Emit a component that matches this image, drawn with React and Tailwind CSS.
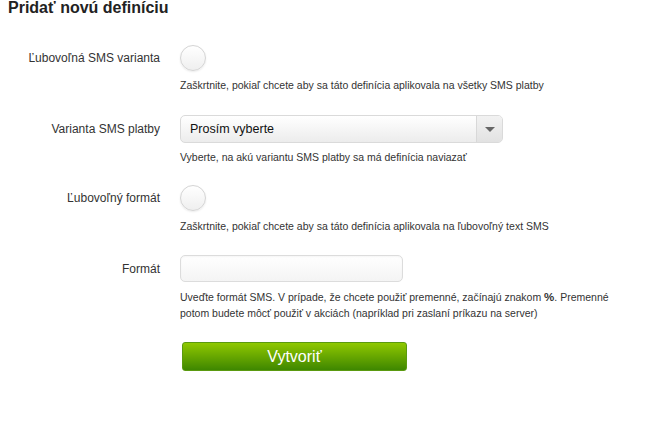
function Radio() {
  return (
    <div className="w-[26px] h-[26px] rounded-full border border-[#d4d4d4] bg-gradient-to-b from-white to-[#efefef] shadow-[0_1px_2px_rgba(0,0,0,0.08)]" />
  );
}

function Row({ label, children, help, className = "", h = "h-[26px]" }) {
  return (
    <div className={`flex ${className}`}>
      <div className={`w-[160px] ${h} flex items-center justify-end text-[12px] text-[#333]`}>
        {label}
      </div>
      <div className="ml-[20px]">
        {children}
        {help}
      </div>
    </div>
  );
}

export default function App() {
  return (
    <div className="w-[662px] h-[426px] bg-white overflow-hidden font-['Liberation_Sans',Arial,sans-serif] text-[#333]">
      <h1 className="ml-[8px] -mt-[1px] text-[16px] font-bold leading-[18px] text-[#222]">
        Pridať novú definíciu
      </h1>

      <div className="mt-[28px]">
        <Row
          label="Ľubovoľná SMS varianta"
          help={
            <p className="mt-[6px] text-[10.5px] leading-[16px] text-[#333]">
              Zaškrtnite, pokiaľ chcete aby sa táto definícia aplikovala na všetky SMS platby
            </p>
          }
        >
          <Radio />
        </Row>

        <Row
          className="mt-[22px]"
          h="h-[28px]"
          label="Varianta SMS platby"
          help={
            <p className="mt-[6px] text-[10.5px] leading-[16px] text-[#333]">
              Vyberte, na akú variantu SMS platby sa má definícia naviazať
            </p>
          }
        >
          <div className="w-[323px] h-[28px] flex rounded-[5px] border border-[#dadada] bg-gradient-to-b from-white to-[#ececec] overflow-hidden">
            <div className="flex-1 flex items-center pl-[9px] text-[12.5px] text-[#111]">
              Prosím vyberte
            </div>
            <div className="w-[26px] flex items-center justify-center border-l border-[#d8d8d8] bg-gradient-to-b from-[#f2f2f2] to-[#e2e2e2]">
              <div className="w-0 h-0 border-l-[5px] border-r-[5px] border-t-[5px] border-l-transparent border-r-transparent border-t-[#666]" />
            </div>
          </div>
        </Row>

        <Row
          className="mt-[20px]"
          label="Ľubovoľný formát"
          help={
            <p className="mt-[7px] text-[10.5px] leading-[16px] text-[#333]">
              Zaškrtnite, pokiaľ chcete aby sa táto definícia aplikovala na ľubovoľný text SMS
            </p>
          }
        >
          <Radio />
        </Row>

        <Row
          className="mt-[21px]"
          h="h-[27px]"
          label="Formát"
          help={
            <p className="mt-[7px] text-[10.5px] leading-[16px] text-[#333]">
              Uveďte formát SMS. V prípade, že chcete použiť premenné, začínajú znakom{" "}
              <b className="text-[11.5px]">%</b>. Premenné
              <br />
              potom budete môcť použiť v akciách (napríklad pri zaslaní príkazu na server)
            </p>
          }
        >
          <div className="w-[223px] h-[27px] rounded-[5px] border border-[#dcdcdc] bg-gradient-to-b from-white to-[#f4f4f4] shadow-[inset_0_1px_2px_rgba(0,0,0,0.04)]" />
        </Row>

        <div className="mt-[21px] ml-[182px]">
          <button className="w-[225px] h-[29px] rounded-[3px] border border-[#5a9a10] bg-gradient-to-b from-[#8fc800] to-[#3e8700] text-white text-[16px] leading-none">
            Vytvoriť
          </button>
        </div>
      </div>
    </div>
  );
}
